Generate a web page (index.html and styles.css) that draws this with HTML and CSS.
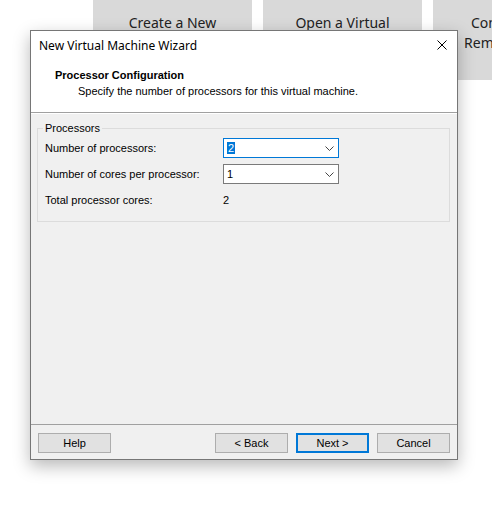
FILE: index.html
```html
<!DOCTYPE html>
<html lang="en">
<head>
  <meta charset="UTF-8" />
  <title>New Virtual Machine Wizard</title>
  <link rel="stylesheet" href="styles.css">
</head>
<body>
  <div class="desktop">
    <div class="tiles">
      <div class="tile">Create a New Virtual Machine</div>
      <div class="tile">Open a Virtual Machine</div>
      <div class="tile">Connect to a Remote Server</div>
    </div>

    <div class="wizard">
      <div class="titlebar">
        <span>New Virtual Machine Wizard</span>
        <svg class="close" width="10" height="10" viewBox="0 0 10 10">
          <path d="M0.5 0.5 L9.5 9.5 M9.5 0.5 L0.5 9.5" stroke="#000" stroke-width="1" fill="none"/>
        </svg>
      </div>

      <div class="header">
        <div class="header-title">Processor Configuration</div>
        <div class="header-sub">Specify the number of processors for this virtual machine.</div>
      </div>

      <div class="content">
        <fieldset class="group">
          <legend>Processors</legend>
          <div class="row">
            <label>Number of processors:</label>
            <div class="combo active">
              <span class="value"><span class="sel">2</span></span>
              <svg class="chev" width="9" height="5" viewBox="0 0 9 5"><path d="M0.5 0.5 L4.5 4.5 L8.5 0.5" stroke="#444" fill="none"/></svg>
            </div>
          </div>
          <div class="row">
            <label>Number of cores per processor:</label>
            <div class="combo">
              <span class="value">1</span>
              <svg class="chev" width="9" height="5" viewBox="0 0 9 5"><path d="M0.5 0.5 L4.5 4.5 L8.5 0.5" stroke="#444" fill="none"/></svg>
            </div>
          </div>
          <div class="row">
            <label>Total processor cores:</label>
            <span class="total">2</span>
          </div>
        </fieldset>
      </div>

      <div class="footer">
        <button>Help</button>
        <div class="nav">
          <button>&lt; Back</button>
          <button class="default">Next &gt;</button>
          <button>Cancel</button>
        </div>
      </div>
    </div>
  </div>
</body>
</html>
```

FILE: styles.css
```css
* {
  box-sizing: border-box;
}

body {
  margin: 0;
  background-color: #ffffff;
  font-family: 'Liberation Sans', Arial, sans-serif;
  font-size: 11px;
  color: #000;
}

.desktop {
  position: relative;
  width: 492px;
  height: 509px;
  overflow: hidden;
}

.tiles {
  display: flex;
  gap: 11px;
  padding-left: 93px;
}

.tile {
  flex: 0 0 159px;
  height: 80px;
  background-color: #d9d9d9;
  color: #222;
  font-family: 'Noto Sans', sans-serif;
  font-size: 14px;
  line-height: 20px;
  text-align: center;
  padding: 13px 20px 0;
}

/* the dialog floats over the start page */
.wizard {
  position: absolute;
  left: 30px;
  top: 30px;
  width: 428px;
  height: 430px;
  border: 1px solid #767676;
  background-color: #f0f0f0;
  box-shadow: 0 6px 16px rgba(0, 0, 0, 0.28);
  display: flex;
  flex-direction: column;
}

.titlebar {
  height: 30px;
  background-color: #fff;
  display: flex;
  align-items: center;
  justify-content: space-between;
  padding: 0 10px 2px 8px;
  font-family: 'Noto Sans', sans-serif;
  font-size: 12px;
}

.header {
  height: 52px;
  background-color: #fff;
  padding-top: 6px;
  line-height: 16px;
  border-bottom: 1px solid #a0a0a0;
}

.header-title {
  font-weight: bold;
  padding-left: 24px;
}

.header-sub {
  padding-left: 47px;
}

.content {
  flex: 1;
  padding: 6px 7px 0 6px;
  border-top: 1px solid #fff;
}

.group {
  margin: 0;
  border: 1px solid #dcdcdc;
  padding: 2px 7px 11px 7px;
}

.group legend {
  padding: 0 2px;
  margin-left: -2px;
  line-height: 16px;
}

.row {
  display: grid;
  grid-template-columns: 178px 116px;
  align-items: center;
  height: 20px;
  margin-bottom: 6px;
}

.row:last-child {
  margin-bottom: 0;
}

.combo {
  height: 20px;
  border: 1px solid #7a7a7a;
  background-color: #fff;
  display: flex;
  align-items: center;
  justify-content: space-between;
  padding: 0 4px 0 3px;
}

.combo.active {
  border-color: #0078d7;
}

.combo .value {
  line-height: 15px;
}

.sel {
  background-color: #0078d7;
  color: #fff;
  padding: 0 1px;
}

.footer {
  border-top: 1px solid #a0a0a0;
  display: flex;
  justify-content: space-between;
  padding: 8px 7px 6px 7px;
}

.nav {
  display: flex;
  gap: 8px;
}

button {
  width: 73px;
  height: 20px;
  padding: 0 0 1px;
  font-family: inherit;
  font-size: 11px;
  color: #000;
  background-color: #e1e1e1;
  border: 1px solid #adadad;
}

button.default {
  border: 2px solid #0078d7;
}
```
